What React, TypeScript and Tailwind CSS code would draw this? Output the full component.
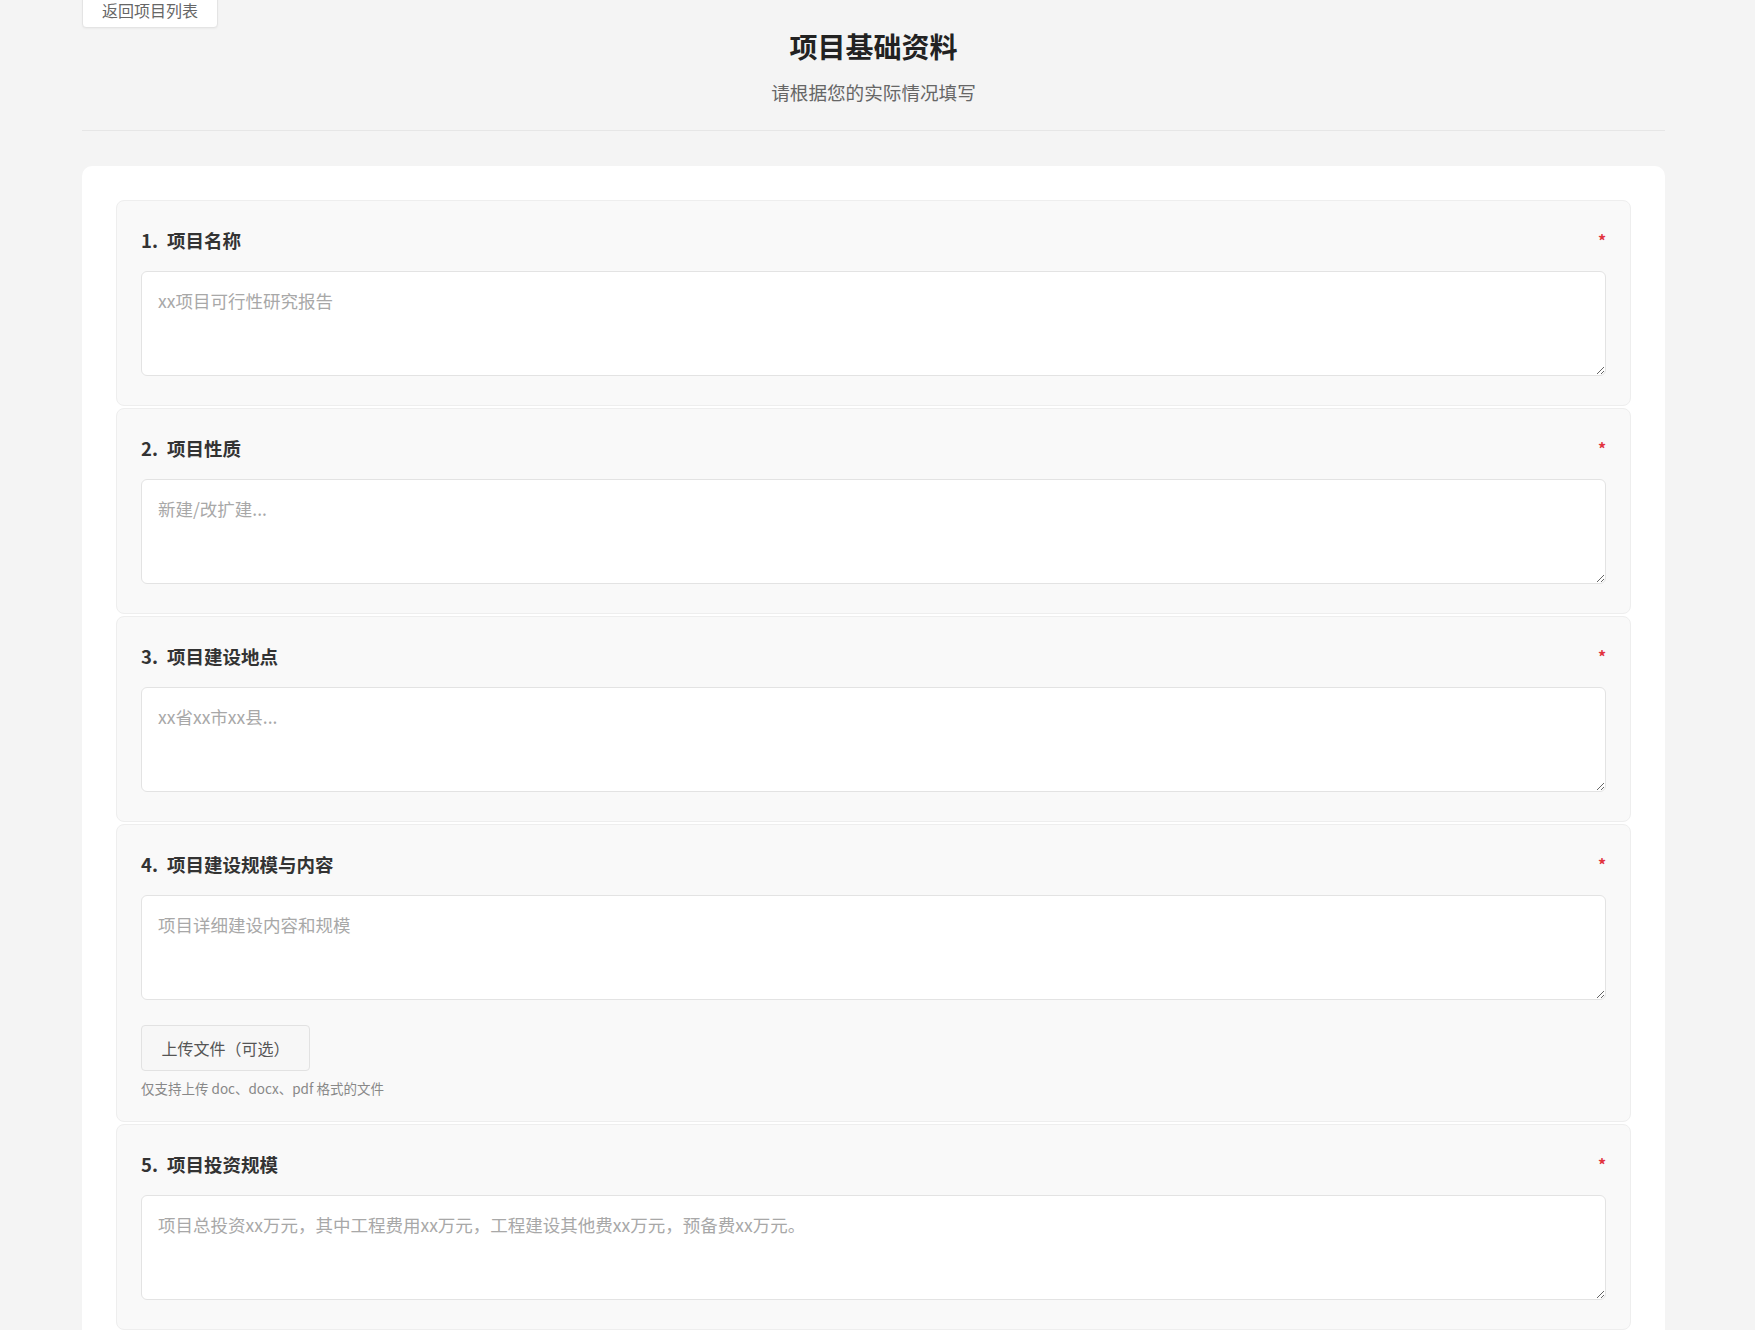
import { useState } from "react";

type Field = {
  label: string;
  placeholder: string;
  upload?: boolean;
};

const fields: Field[] = [
  { label: "项目名称", placeholder: "xx项目可行性研究报告" },
  { label: "项目性质", placeholder: "新建/改扩建..." },
  { label: "项目建设地点", placeholder: "xx省xx市xx县..." },
  { label: "项目建设规模与内容", placeholder: "项目详细建设内容和规模", upload: true },
  {
    label: "项目投资规模",
    placeholder: "项目总投资xx万元，其中工程费用xx万元，工程建设其他费xx万元，预备费xx万元。",
  },
];

function FieldCard({ index, field }: { index: number; field: Field }) {
  const [value, setValue] = useState("");
  return (
    <div
      className={`rounded-[8px] border border-[#eeeeee] bg-[#f9f9f9] px-[24px] pt-[24px] ${
        field.upload ? "pb-[24px]" : "pb-[29px]"
      }`}
    >
      <div className="flex items-center justify-between">
        <div className="text-[18.5px] font-bold leading-[30px] text-[#333333]">
          <span>{index}.</span>
          <span className="ml-[9px]">{field.label}</span>
        </div>
        <span className="text-[16px] font-bold leading-[30px] text-[#e2343f]">*</span>
      </div>
      <textarea
        value={value}
        onChange={(e) => setValue(e.target.value)}
        placeholder={field.placeholder}
        className="mt-[16px] block h-[105px] w-full rounded-[6px] border border-[#e3e3e3] bg-white px-[16px] py-[15px] text-[17.5px] leading-[28px] text-[#333] outline-none placeholder:text-[#a8a8a8]"
      />
      {field.upload && (
        <div className="mt-[25px]">
          <button className="h-[46px] w-[169px] rounded-[4px] border border-[#e2e2e2] bg-[#f7f7f7] text-[16px] text-[#555555]">
            上传文件（可选）
          </button>
          <p className="mt-[8px] text-[13.5px] leading-[18px] text-[#888888]">
            仅支持上传 doc、docx、pdf 格式的文件
          </p>
        </div>
      )}
    </div>
  );
}

export default function App() {
  return (
    <div
      className="min-h-screen overflow-hidden bg-[#f4f4f4] pb-[40px]"
      style={{ fontFamily: '"Noto Sans CJK SC", "Noto Sans", sans-serif' }}
    >
      <div className="ml-[82px] w-[1583px]">
        {/* header */}
        <div className="grid grid-cols-[1fr_auto_1fr] border-b border-[#e6e6e6] pb-[24px]">
          <div>
            <button className="-mt-[12px] block h-[40px] rounded-[4px] border border-[#e4e4e4] bg-white px-[19px] pt-[4px] text-[16px] leading-[20px] text-[#666666] shadow-[0_1px_2px_rgba(0,0,0,0.04)]">
              返回项目列表
            </button>
          </div>
          <div className="pt-[26px] text-center">
            <h1 className="text-[28px] font-bold leading-[40px] text-[#222222]">项目基础资料</h1>
            <p className="mt-[12px] text-[18.6px] leading-[28px] text-[#666666]">请根据您的实际情况填写</p>
          </div>
          <div />
        </div>

        {/* form card */}
        <div className="mt-[35px] rounded-[10px] bg-white p-[34px]">
          <div className="flex flex-col gap-[2px]">
            {fields.map((f, i) => (
              <FieldCard key={f.label} index={i + 1} field={f} />
            ))}
          </div>
        </div>
      </div>
    </div>
  );
}
